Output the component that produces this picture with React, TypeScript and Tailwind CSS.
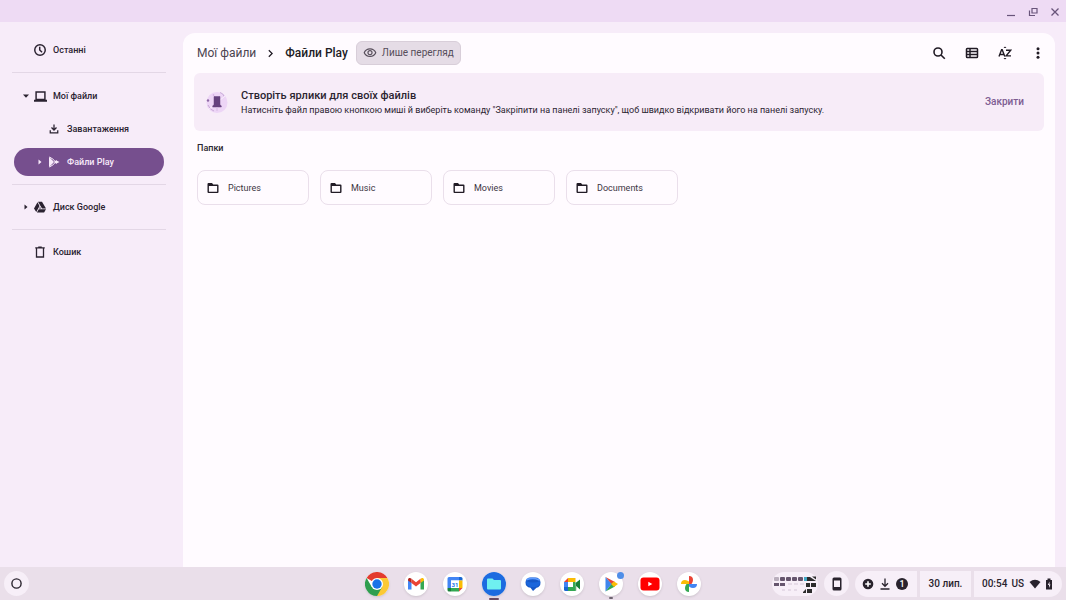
import React from 'react'
import { MdChevronRight, MdOutlineVisibility } from 'react-icons/md'

type IconProps = { className?: string }

const ClockIcon = ({ className = '' }: IconProps) => (
  <svg viewBox="0 0 24 24" fill="none" stroke="currentColor" strokeWidth="2.500" className={className}>
    <circle cx="12" cy="12" r="9" />
    <path d="M11.500 6.500V12l4 4" />
  </svg>
)

const LaptopIcon = ({ className = '' }: IconProps) => (
  <svg viewBox="0 0 24 24" fill="currentColor" className={className}>
    <path fillRule="evenodd" d="M2.500 2.500h19V18H24v3.500H0V18h2.500V2.500ZM5.200 5.200v11h13.600v-11H5.200Z" />
  </svg>
)

const DownloadIcon = ({ className = '' }: IconProps) => (
  <svg viewBox="0 0 24 24" fill="none" stroke="currentColor" strokeWidth="3" className={className}>
    <path d="M12 1v13M6 8.500l6 6 6-6M3 15v6h18v-6" />
  </svg>
)

const PlayOutlineIcon = ({ className = '' }: IconProps) => (
  <svg viewBox="0 0 24 24" fill="currentColor" className={className}>
    <path d="M2 1.500v21L12 12Z" />
    <path fill="none" stroke="currentColor" strokeWidth="2" strokeLinejoin="round" d="M3 2l8 5 5.500 8M3 22l8-5 5.500-8" />
    <path d="M16 8.500 23 12l-7 3.500-2-3.500Z" />
  </svg>
)

const DriveIcon = ({ className = '' }: IconProps) => (
  <svg viewBox="0 0 24 24" fill="currentColor" className={className}>
    <path d="M8 1.500h8L24 15h-8L8 1.500ZM7 2.700l4 7.200L4.500 22 0 15ZM9.500 16.300H24L20.200 23H5.800ZM12 11.800l2 3.400h-4Z" />
  </svg>
)

const TrashIcon = ({ className = '' }: IconProps) => (
  <svg viewBox="0 0 24 24" fill="none" stroke="currentColor" strokeWidth="2.600" className={className}>
    <path d="M5 4v18h14V4M2.500 3.800h19M8.500 2.400h7" />
  </svg>
)

const FolderIcon = ({ className = '' }: IconProps) => (
  <svg viewBox="0 0 24 24" fill="currentColor" className={className}>
    <path fillRule="evenodd" d="M3 2h7l2.500 3H21a2 2 0 0 1 2 2v13a2 2 0 0 1-2 2H3a2 2 0 0 1-2-2V4a2 2 0 0 1 2-2Zm.8 6v11.300h16.400V8H3.800Z" />
  </svg>
)

const Caret = ({ open, className = '' }: { open?: boolean; className?: string }) => (
  <svg viewBox="0 0 6 6" fill="currentColor" className={`size-[6px] shrink-0 ${className}`}>
    <path d={open ? 'M0 1.500h6L3 4.800Z' : 'M1.500 0.500v5L4.500 3Z'} />
  </svg>
)

interface NavItemProps {
  label: string
  icon: React.ReactNode
  caret?: 'open' | 'closed'
  nested?: boolean
  active?: boolean
}

const NavItem = ({ label, icon, caret, nested, active }: NavItemProps) => (
  <button
    className={`flex h-7 items-center rounded-full text-left leading-[14px] ${nested ? 'pl-[23px]' : 'pl-[9px]'} ${
      active ? 'bg-[#764f8e] text-[#f8eafa]' : ''
    }`}
  >
    <span className="flex w-[11px] shrink-0 items-center">
      {caret && <Caret open={caret === 'open'} />}
    </span>
    <span className="flex w-3 shrink-0 items-center justify-center">{icon}</span>
    <span className="ml-[7px] whitespace-nowrap">{label}</span>
  </button>
)

const Sidebar = () => (
  <nav className="flex w-[183px] shrink-0 flex-col bg-[#f7ecf9] pl-3 pr-[17px] pt-[6px] text-[9px] font-medium text-[#2a2230]">
    <div className="flex flex-col border-b border-[#e3d7e6] px-[2px] py-2">
      <NavItem label="Останні" icon={<ClockIcon className="size-[14px] shrink-0" />} />
    </div>
    <div className="flex flex-col gap-[5px] border-b border-[#e3d7e6] px-[2px] pb-2 pt-[9px]">
      <NavItem label="Мої файли" caret="open" icon={<LaptopIcon className="size-[13px] shrink-0" />} />
      <NavItem label="Завантаження" nested icon={<DownloadIcon className="size-[10px]" />} />
      <NavItem label="Файли Play" nested active caret="closed" icon={<PlayOutlineIcon className="size-3" />} />
    </div>
    <div className="flex flex-col border-b border-[#e3d7e6] px-[2px] py-2">
      <NavItem label="Диск Google" caret="closed" icon={<DriveIcon className="size-3" />} />
    </div>
    <div className="flex flex-col px-[2px] py-2">
      <NavItem label="Кошик" icon={<TrashIcon className="size-3 shrink-0" />} />
    </div>
  </nav>
)

const TitleBar = () => (
  <header className="flex h-[22px] shrink-0 items-center justify-end gap-3 bg-[#eedbf4] pr-[6px] pt-px text-[#68547a]">
    <button aria-label="Згорнути">
      <svg viewBox="0 0 10 10" className="size-[10px]" fill="none" stroke="currentColor" strokeWidth="1.200">
        <path d="M1 8.500h8" />
      </svg>
    </button>
    <button aria-label="Відновити">
      <svg viewBox="0 0 10 10" className="size-[10px]" fill="none" stroke="currentColor" strokeWidth="1.200">
        <path d="M4 1.500h5v4.500H4ZM1.500 3.500v5H7" />
      </svg>
    </button>
    <button aria-label="Закрити вікно">
      <svg viewBox="0 0 10 10" className="size-[10px]" fill="none" stroke="currentColor" strokeWidth="1.300">
        <path d="m1.500 1.500 7 7M8.500 1.500l-7 7" />
      </svg>
    </button>
  </header>
)

const Toolbar = () => (
  <div className="flex h-10 items-center pl-[14px] pr-[10px] text-[#211b25]">
    <div className="flex items-center text-[12px] leading-4">
      <a href="#" className="text-[#4c4450]">Мої файли</a>
      <MdChevronRight className="mx-[7px] size-[15px]" />
      <span className="font-medium">Файли Play</span>
    </div>
    <div className="ml-2 flex h-6 items-center gap-[5px] rounded-md border border-[#d8ced9] bg-[#e5dce6] px-[6px] text-[10px] leading-[14px] text-[#564d5a]">
      <MdOutlineVisibility className="size-[14px]" />
      <span>Лише перегляд</span>
    </div>
    <div className="ml-auto flex items-center gap-[19px]">
      <button aria-label="Пошук">
        <svg viewBox="0 0 14 14" className="size-[14px]" fill="none" stroke="currentColor" strokeWidth="1.600">
          <circle cx="6" cy="6" r="4" />
          <path d="m9 9 3.800 3.800" />
        </svg>
      </button>
      <button aria-label="Список">
        <svg viewBox="0 0 14 14" className="size-[14px]" fill="none" stroke="currentColor" strokeWidth="1.500">
          <rect x="1.500" y="2.500" width="11" height="9" rx=".8" />
          <path d="M5 2.500v9M1.500 5.500h11M1.500 8.500h11" />
        </svg>
      </button>
      <button aria-label="Сортувати">
        <svg viewBox="0 0 14 14" className="size-[14px]" fill="none" stroke="currentColor" strokeWidth="1.400">
          <path d="M1 10.500 3.600 3.800h.6l2.600 6.700M2 8.500h3.800M8 4.200h4.700L8.200 9.900H13" />
          <path d="M5.500 2 7 .5 8.500 2ZM5.500 12 7 13.500 8.500 12Z" fill="currentColor" stroke="none" />
        </svg>
      </button>
      <button aria-label="Більше">
        <svg viewBox="0 0 14 14" className="size-[14px]" fill="currentColor">
          <circle cx="7" cy="2.800" r="1.500" />
          <circle cx="7" cy="7" r="1.500" />
          <circle cx="7" cy="11.200" r="1.500" />
        </svg>
      </button>
    </div>
  </div>
)

const Banner = () => (
  <section className="mx-[11px] flex h-[58px] items-center rounded-md bg-[#f7ecf8] pl-[11px] pr-5">
    <svg viewBox="0 0 24 24" className="size-6 shrink-0">
      <circle cx="12" cy="12.500" r="10.500" fill="#edd5f6" />
      <path d="M15 2.500q3 .5 4.500 4.500M3 15q2 5 6 6" fill="none" stroke="#c3a5d3" strokeWidth=".9" />
      <circle cx="3" cy="10.500" r="1.200" fill="#8d68a5" />
      <circle cx="8.500" cy="5" r=".8" fill="#c9a7db" />
      <path d="M3 20 20 6" stroke="#fbf2fc" />
      <path d="M9 6.500h6v8l1.300 1.500v1H7.700v-1L9 14.500Z" fill="#65417e" stroke="#65417e" strokeWidth=".5" />
      <path d="M12 17v4" stroke="#d6b9e3" />
    </svg>
    <div className="ml-3 text-[#2b2430]">
      <h2 className="text-[11px] font-medium leading-[15px]">Створіть ярлики для своїх файлів</h2>
      <p className="text-[9px] leading-[14px]">
        Натисніть файл правою кнопкою миші й виберіть команду "Закріпити на панелі запуску", щоб швидко відкривати його на панелі запуску.
      </p>
    </div>
    <button className="ml-auto text-[10px] font-medium leading-[14px] text-[#7d5c92]">Закрити</button>
  </section>
)

const folders = ['Pictures', 'Music', 'Movies', 'Documents']

const Folders = () => (
  <section className="px-[14px] pt-[10px] text-[9px] leading-[14px]">
    <h3 className="font-medium text-[#2b2430]">Папки</h3>
    <div className="mt-[15px] flex flex-wrap gap-[11px]">
      {folders.map((name) => (
        <button
          key={name}
          className="flex h-[35px] w-[112px] items-center gap-[9px] rounded-lg border border-[#eadfeb] pl-[9px] text-[#3d3542]"
        >
          <FolderIcon className="size-3 text-[#211b25]" />
          {name}
        </button>
      ))}
    </div>
  </section>
)

const ChromeLogo = () => (
  <svg viewBox="0 0 24 24" className="size-6">
    <path d="M12 12 1.600 6a12 12 0 0 1 20.800 0Z" fill="#e33b2e" />
    <path d="M12 12V6h10.400A12 12 0 0 1 12 24Z" fill="#fcc934" />
    <path d="M12 12 17.200 15 12 24A12 12 0 0 1 1.600 6l5.200 9Z" fill="#2f9e4f" />
    <circle cx="12" cy="12" r="6" fill="#fff" />
    <circle cx="12" cy="12" r="4.700" fill="#1a73e8" />
  </svg>
)

const GmailLogo = () => (
  <svg viewBox="0 0 24 24" className="size-6">
    <path d="M4 8v9.500h3.500v-8Z" fill="#4285f4" />
    <path d="M16.500 9.500v8H20V8Z" fill="#34a853" />
    <path d="M4 8c0-2 2-2.500 3.500-1.300V11L4 8.500Z" fill="#b3261e" />
    <path d="M20 8c0-2-2-2.500-3.500-1.300V11L20 8.500Z" fill="#fbbc04" />
    <path d="M7.500 6.700 12 10.200l4.500-3.500V11L12 14.500 7.500 11Z" fill="#ea4335" />
  </svg>
)

const CalendarLogo = () => (
  <svg viewBox="0 0 24 24" className="size-6">
    <path d="M6 5h10v3.500H8V16H4.500V6.500Q4.500 5 6 5Z" fill="#4285f4" />
    <path d="M16 5h2q1.500 0 1.500 1.500v2H16Z" fill="#1967d2" />
    <path d="M16 8.500h3.500V16H16Z" fill="#fbbc04" />
    <path d="M8 16h8v3.500H8Z" fill="#34a853" />
    <path d="M4.500 16H8v3.500H6q-1.500 0-1.500-1.500Z" fill="#188038" />
    <path d="M16 16h3.500L16 19.500Z" fill="#ea4335" />
    <path d="M8 8.500h8V16H8Z" fill="#fff" />
    <text x="12" y="14.500" textAnchor="middle" fontSize="6" fontWeight="700" fill="#1a73e8">31</text>
  </svg>
)

const FilesLogo = () => (
  <svg viewBox="0 0 24 24" className="size-6">
    <circle cx="12" cy="12" r="12" fill="#1c6be0" />
    <path d="M6 6.500h4.500L12 8h6q1 0 1 1v7.500q0 1-1 1H6q-1 0-1-1v-9q0-1 1-1Z" fill="#6ff0f0" />
  </svg>
)

const MessagesLogo = () => (
  <svg viewBox="0 0 24 24" className="size-6">
    <path d="M9.500 5.500h5a5 5 0 0 1 5 5q0 4.500-4 5.300L12 19l-2.500-3.200Q4.500 15 4.500 10.500a5 5 0 0 1 5-5Z" fill="#1558c8" />
    <path d="M5 9q7 3 14 0 .5 5-5 6H10q-5-1-5-6Z" fill="#1a66dc" />
    <path d="M6 7.500q6-2.500 12 .3" fill="none" stroke="#5c9bff" strokeWidth="1.800" strokeLinecap="round" />
  </svg>
)

const MeetLogo = () => (
  <svg viewBox="0 0 24 24" className="size-6">
    <path d="M8 6v4H4Z" fill="#ea4335" />
    <path d="M4 10h4v5H4Z" fill="#4285f4" />
    <path d="M8 6h7.500v4H8Z" fill="#fbbc04" />
    <path d="M4 15h4v4H5.500Q4 19 4 17.500Z" fill="#1967d2" />
    <path d="M8 15h7.500v4H8Z" fill="#34a853" />
    <path d="M15.500 6v13l.7-.5V14l3.800 3.500v-10L15.500 11Z" fill="#188038" />
    <path d="M13 10h2.500v5H13Z" fill="#34a853" />
  </svg>
)

const PlayLogo = () => (
  <svg viewBox="0 0 24 24" className="size-6">
    <path d="m6.500 5 9.500 5-3.500 2.500Z" fill="#ea4335" />
    <path d="m6.500 19.500 6-8 3.500 3Z" fill="#34a853" />
    <path d="m15 9.500 4 2.500-4 3-3-3Z" fill="#fbbc04" />
    <path d="m6.500 5 6 7-6 7.500Z" fill="#3f86ed" />
  </svg>
)

const YoutubeLogo = () => (
  <svg viewBox="0 0 24 24" className="size-6">
    <rect x="2.500" y="5.500" width="19" height="13" rx="3" fill="#f00" />
    <path d="M10.300 9.700v4.600L14.300 12Z" fill="#fff" />
  </svg>
)

const PhotosLogo = () => (
  <svg viewBox="0 0 24 24" className="size-6">
    <path d="M12 12V4a4 4 0 0 1 4 4q0 2-1.500 4Z" fill="#ea4335" />
    <path d="M12 12h8a4 4 0 0 1-4 4q-2 0-4-1.500Z" fill="#4285f4" />
    <path d="M12 12v8a4 4 0 0 1-4-4q0-2 1.500-4Z" fill="#34a853" />
    <path d="M12 12H4a4 4 0 0 1 4-4q2 0 4 1.500Z" fill="#fbbc04" />
  </svg>
)

const apps = [
  { name: 'Chrome', Logo: ChromeLogo },
  { name: 'Gmail', Logo: GmailLogo },
  { name: 'Calendar', Logo: CalendarLogo },
  { name: 'Files', Logo: FilesLogo, state: 'focused' },
  { name: 'Messages', Logo: MessagesLogo },
  { name: 'Meet', Logo: MeetLogo },
  { name: 'Play', Logo: PlayLogo, state: 'running' },
  { name: 'YouTube', Logo: YoutubeLogo },
  { name: 'Photos', Logo: PhotosLogo },
]

const KeyboardPreview = () => (
  <svg viewBox="0 0 46 24" className="h-6 w-[46px]">
    {[2, 8, 14, 20, 26].map((x) => (
      <rect key={x} x={x} y="5" width="5" height="4" rx="1" fill={x === 2 ? '#b9aebc' : '#66566e'} />
    ))}
    <path d="M32 5h3v4h-3Z" fill="#42a7c4" />
    <path d="M35 5h3l6 4h-9ZM40 4.500h4v3ZM34 11h4v4h-4ZM39 11h5v4h-5ZM31 20l3-3v4h-3ZM35 17h5v4h-5Z" fill="#2c2c2c" />
    <path d="M2 11h5v3H2ZM8 11h5v3H8Z" fill="#66566e" />
    <path d="M16 12h4M22 12h4M28 12h4M10 18h3M16 18h3M22 18h3" stroke="#e6dbe8" strokeWidth="2" />
  </svg>
)

const TrayDownloadIcon = () => (
  <svg viewBox="0 0 12 12" className="size-3" fill="none" stroke="currentColor" strokeWidth="1.300">
    <path d="M6 .5v7.500M3 5.300 6 8.300l3-3M1.500 11h9" />
  </svg>
)

const Shelf = () => (
  <footer className="grid h-[33px] shrink-0 grid-cols-[1fr_auto_1fr] items-center bg-[#eadfea] px-1 text-[#29232d]">
    <button aria-label="Панель запуску" className="flex size-[25px] items-center justify-center rounded-full bg-[#f7eff8]">
      <svg viewBox="0 0 11 11" className="size-[11px]" fill="none" stroke="currentColor" strokeWidth="1.400">
        <circle cx="5.500" cy="5.500" r="4.600" />
      </svg>
    </button>
    <div className="flex items-center gap-[15px]">
      {apps.map(({ name, Logo, state }) => (
        <button key={name} aria-label={name} className="relative rounded-full bg-white shadow-sm">
          <Logo />
          {state === 'running' && (
            <>
              <span className="absolute -right-[1px] top-0 size-[7px] rounded-full bg-[#4f8ee8]" />
              <span className="absolute -bottom-[3px] left-[10px] h-[2px] w-1 rounded-full bg-[#6d6470]" />
            </>
          )}
          {state === 'focused' && (
            <span className="absolute -bottom-[4px] left-[7px] h-[2px] w-[10px] rounded-full bg-[#6a4a63]" />
          )}
        </button>
      ))}
    </div>
    <div className="flex items-center justify-end text-[10px] font-medium leading-[14px]">
      <button aria-label="Клавіатура" className="rounded-full bg-[#f7eff8]">
        <KeyboardPreview />
      </button>
      <button aria-label="Телефон" className="ml-[6px] flex size-[25px] items-center justify-center rounded-full bg-[#f7eff8]">
        <svg viewBox="0 0 10 14" className="h-[14px] w-[10px]">
          <rect x=".5" y=".5" width="9" height="13" rx="1.500" fill="currentColor" />
          <rect x="2" y="3.500" width="6" height="6.500" fill="#f7eff8" />
        </svg>
      </button>
      <button aria-label="Файли" className="ml-[6px] flex h-[26px] w-[62px] items-center justify-end gap-[5px] rounded-l-full bg-[#f7eff8] pr-[9px]">
        <svg viewBox="0 0 12 12" className="size-3">
          <circle cx="6" cy="6" r="5.300" fill="currentColor" />
          <path d="M5.200 3.200h1.600v2h2v1.600h-2v2H5.200v-2h-2V5.200h2Z" fill="#fff" />
        </svg>
        <TrayDownloadIcon />
        <span className="flex size-3 items-center justify-center rounded-full bg-[#29232d] text-[9px] text-white">1</span>
      </button>
      <button className="ml-[3px] h-[26px] w-[51px] bg-[#f7eff8]">30 лип.</button>
      <button className="ml-[3px] flex h-[26px] w-[88px] items-center rounded-r-full bg-[#f7eff8] pl-2">
        <span>00:54</span>
        <span className="ml-1">US</span>
        <svg viewBox="0 0 12 10" className="ml-[5px] h-[10px] w-3" fill="currentColor">
          <path d="M.5 3Q6-1.500 11.500 3L6 9.500Z" />
        </svg>
        <svg viewBox="0 0 8 12" className="ml-1 h-3 w-2">
          <path d="M2.500.5h3V2H7v9.500H1V2h1.500Z" fill="currentColor" />
          <path d="M4.500 3.500 2.800 7H4v3l1.500-3.500H4.500Z" fill="#f7eff8" />
        </svg>
      </button>
    </div>
  </footer>
)

const App: React.FC = () => (
  <div className="flex h-screen flex-col bg-[#f7ecf9] font-['Roboto','Noto_Sans',sans-serif]">
    <TitleBar />
    <div className="flex min-h-0 flex-1">
      <Sidebar />
      <main className="mr-[11px] mt-[11px] min-w-0 flex-1 rounded-t-xl bg-[#fffbff]">
        <Toolbar />
        <Banner />
        <Folders />
      </main>
    </div>
    <Shelf />
  </div>
)

export default App
